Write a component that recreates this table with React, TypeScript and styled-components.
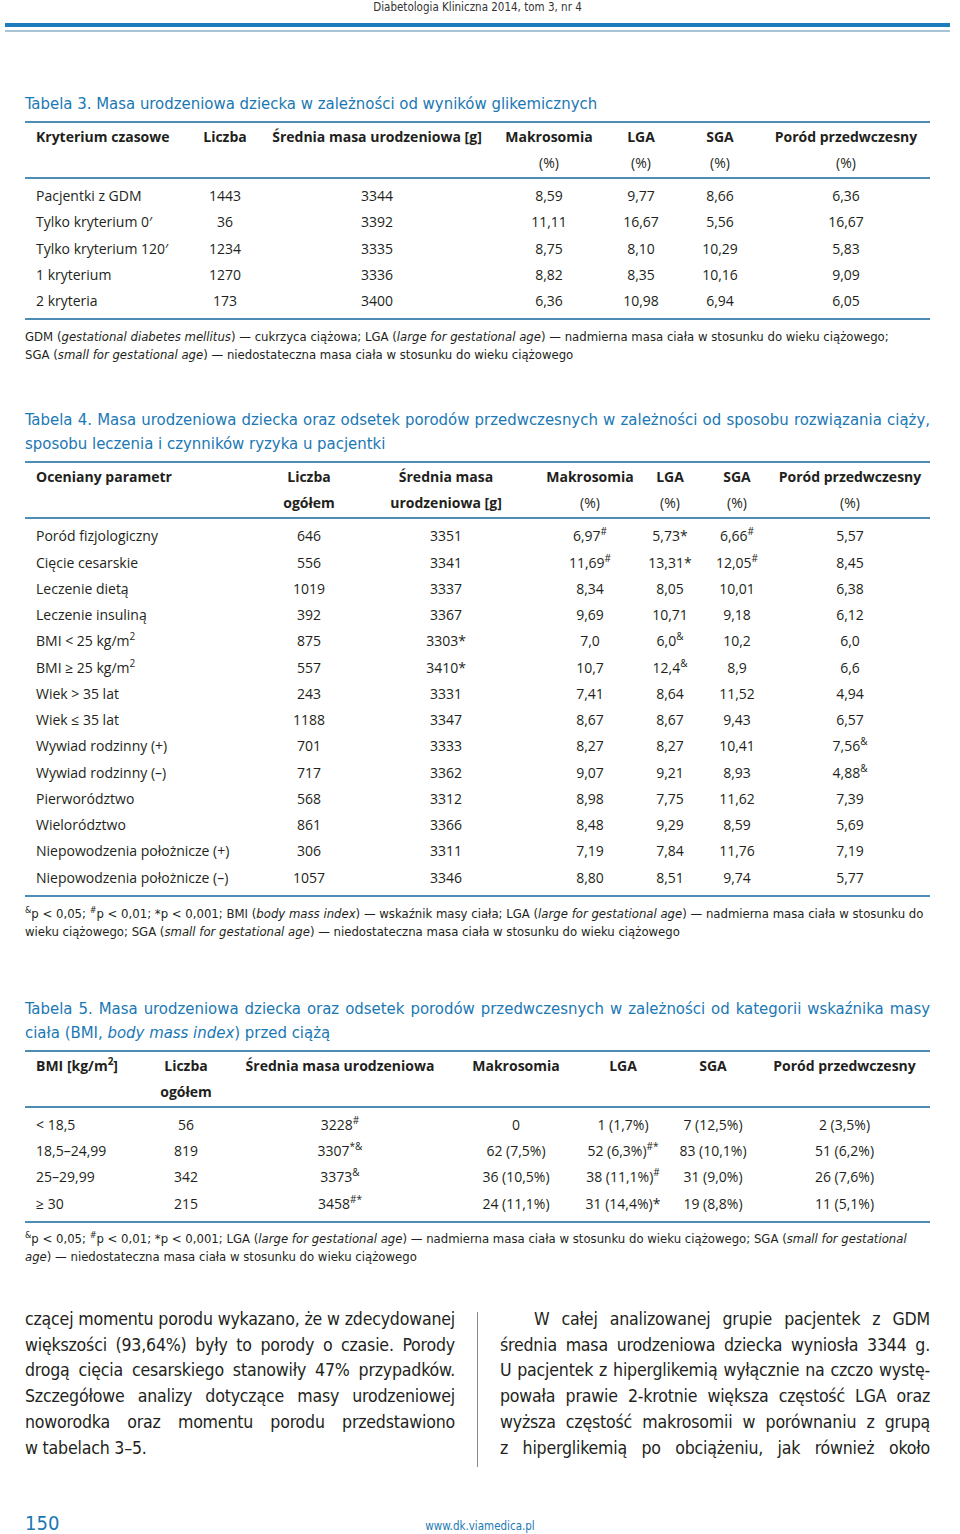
import React from 'react';
import styled, { createGlobalStyle } from 'styled-components';

const narrow = '"Liberation Sans Narrow", "DejaVu Sans Condensed", "Roboto", sans-serif';
const sans = '"Open Sans", "Noto Sans", sans-serif';
const blue = '#1a78b4';
const rule = '#4f8cb4';
const ink = '#231f20';

const GlobalStyle = createGlobalStyle`
  html, body {
    margin: 0;
    padding: 0;
    background: #ffffff;
  }
  body {
    color: ${ink};
    font-family: ${sans};
  }
`;

// a cell is "base^sup^rest"; sup and rest are optional
type Cell = string;
type TableData = {
  cols: number[];
  head: [string, string][];
  rows: Cell[][];
};

const table3: TableData = {
  cols: [165, 70, 234, 110, 74, 84, 168],
  head: [
    ['Kryterium czasowe', ''],
    ['Liczba', ''],
    ['Średnia masa urodzeniowa [g]', ''],
    ['Makrosomia', '(%)'],
    ['LGA', '(%)'],
    ['SGA', '(%)'],
    ['Poród przedwczesny', '(%)'],
  ],
  rows: [
    ['Pacjentki z GDM', '1443', '3344', '8,59', '9,77', '8,66', '6,36'],
    ['Tylko kryterium 0′', '36', '3392', '11,11', '16,67', '5,56', '16,67'],
    ['Tylko kryterium 120′', '1234', '3335', '8,75', '8,10', '10,29', '5,83'],
    ['1 kryterium', '1270', '3336', '8,82', '8,35', '10,16', '9,09'],
    ['2 kryteria', '173', '3400', '6,36', '10,98', '6,94', '6,05'],
  ],
};

const table4: TableData = {
  cols: [245, 78, 196, 92, 68, 66, 160],
  head: [
    ['Oceniany parametr', ''],
    ['Liczba', '*ogółem'],
    ['Średnia masa', '*urodzeniowa [g]'],
    ['Makrosomia', '(%)'],
    ['LGA', '(%)'],
    ['SGA', '(%)'],
    ['Poród przedwczesny', '(%)'],
  ],
  rows: [
    ['Poród fizjologiczny', '646', '3351', '6,97^#', '5,73*', '6,66^#', '5,57'],
    ['Cięcie cesarskie', '556', '3341', '11,69^#', '13,31*', '12,05^#', '8,45'],
    ['Leczenie dietą', '1019', '3337', '8,34', '8,05', '10,01', '6,38'],
    ['Leczenie insuliną', '392', '3367', '9,69', '10,71', '9,18', '6,12'],
    ['BMI < 25 kg/m^2', '875', '3303*', '7,0', '6,0^&', '10,2', '6,0'],
    ['BMI ≥ 25 kg/m^2', '557', '3410*', '10,7', '12,4^&', '8,9', '6,6'],
    ['Wiek > 35 lat', '243', '3331', '7,41', '8,64', '11,52', '4,94'],
    ['Wiek ≤ 35 lat', '1188', '3347', '8,67', '8,67', '9,43', '6,57'],
    ['Wywiad rodzinny (+)', '701', '3333', '8,27', '8,27', '10,41', '7,56^&'],
    ['Wywiad rodzinny (–)', '717', '3362', '9,07', '9,21', '8,93', '4,88^&'],
    ['Pierworództwo', '568', '3312', '8,98', '7,75', '11,62', '7,39'],
    ['Wielorództwo', '861', '3366', '8,48', '9,29', '8,59', '5,69'],
    ['Niepowodzenia położnicze (+)', '306', '3311', '7,19', '7,84', '11,76', '7,19'],
    ['Niepowodzenia położnicze (–)', '1057', '3346', '8,80', '8,51', '9,74', '5,77'],
  ],
};

const table5: TableData = {
  cols: [120, 82, 226, 126, 88, 92, 171],
  head: [
    ['BMI [kg/m^2^]', ''],
    ['Liczba', '*ogółem'],
    ['Średnia masa urodzeniowa', ''],
    ['Makrosomia', ''],
    ['LGA', ''],
    ['SGA', ''],
    ['Poród przedwczesny', ''],
  ],
  rows: [
    ['< 18,5', '56', '3228^#', '0', '1 (1,7%)', '7 (12,5%)', '2 (3,5%)'],
    ['18,5–24,99', '819', '3307^*&', '62 (7,5%)', '52 (6,3%)^#*', '83 (10,1%)', '51 (6,2%)'],
    ['25–29,99', '342', '3373^&', '36 (10,5%)', '38 (11,1%)^#', '31 (9,0%)', '26 (7,6%)'],
    ['≥ 30', '215', '3458^#*', '24 (11,1%)', '31 (14,4%)*', '19 (8,8%)', '11 (5,1%)'],
  ],
};

const leftColumn = [
  'czącej momentu porodu wykazano, że w zdecydowanej',
  'większości (93,64%) były to porody o czasie. Porody',
  'drogą cięcia cesarskiego stanowiły 47% przypadków.',
  'Szczegółowe analizy dotyczące masy urodzeniowej',
  'noworodka oraz momentu porodu przedstawiono',
  'w tabelach 3–5.',
];

const rightColumn = [
  'W całej analizowanej grupie pacjentek z GDM',
  'średnia masa urodzeniowa dziecka wyniosła 3344 g.',
  'U pacjentek z hiperglikemią wyłącznie na czczo wystę-',
  'powała prawie 2-krotnie większa częstość LGA oraz',
  'wyższa częstość makrosomii w porównaniu z grupą',
  'z hiperglikemią po obciążeniu, jak również około',
];

const Page = styled.div`
  width: 960px;
  height: 1534px;
  overflow: hidden;
  box-sizing: border-box;
  padding: 0 30px 0 25px;
`;

const RunningHead = styled.div`
  margin: 0 -25px;
  text-align: center;
  font-family: ${narrow};
  font-size: 11.5px;
  line-height: 14px;
  color: #333;
`;

const TopBar = styled.div`
  margin: 9px -20px 0 -20px;
  height: 4px;
  background: #1c7dbd;
`;

const ThinBar = styled.div`
  margin: 3px -20px 0 -20px;
  height: 2px;
  background: #a9c3d3;
`;

const Title = styled.div<{ $top: number }>`
  margin-top: ${(p) => p.$top}px;
  margin-bottom: 5px;
  color: ${blue};
  font-family: ${narrow};
  font-size: 16.6px;
  line-height: 24px;
`;

const TitleLine = styled.div<{ $full?: boolean }>`
  text-align: ${(p) => (p.$full ? 'justify' : 'left')};
  text-align-last: ${(p) => (p.$full ? 'justify' : 'left')};
  white-space: nowrap;
`;

const Table = styled.table`
  width: 905px;
  table-layout: fixed;
  border-collapse: collapse;
  border-top: 2px solid ${rule};
  border-bottom: 2px solid ${rule};
  font-family: ${sans};
  font-size: 14px;
  color: ${ink};

  thead tr {
    border-bottom: 2px solid ${rule};
  }
  tbody tr:first-child td {
    padding-top: 4px;
  }
  tbody tr:last-child td {
    padding-bottom: 4px;
  }
`;

const Col = styled.col<{ $w: number }>`
  width: ${(p) => p.$w}px;
`;

const Th = styled.th`
  padding: 1px 0 1px;
  vertical-align: top;
  text-align: center;
  font-weight: 700;
  line-height: 26px;
  white-space: nowrap;

  &:first-child {
    text-align: left;
    padding-left: 11px;
  }
`;

const SubHead = styled.div<{ $bold: boolean }>`
  height: 26px;
  font-weight: ${(p) => (p.$bold ? 700 : 400)};
`;

const Td = styled.td`
  padding: 0;
  text-align: center;
  line-height: 26.25px;
  white-space: nowrap;

  &:first-child {
    text-align: left;
    padding-left: 11px;
  }
`;

const Sup = styled.sup`
  font-size: 10px;
  line-height: 0;
  vertical-align: 6px;
`;

const Note = styled.div<{ $top: number }>`
  margin-top: ${(p) => p.$top}px;
  font-family: ${narrow};
  font-size: 13px;
  line-height: 18px;
  color: ${ink};
  white-space: nowrap;
`;

const NoteSup = styled.sup`
  font-size: 9px;
  line-height: 0;
  vertical-align: 5px;
`;

const Columns = styled.div`
  margin-top: 41px;
  display: grid;
  grid-template-columns: 430px 1px 430px;
  column-gap: 22px;
  align-items: start;
`;

const Divider = styled.div`
  background: #8a8a8a;
  margin-top: 5px;
  height: 155px;
`;

const Text = styled.div`
  font-family: ${narrow};
  font-size: 17.6px;
  letter-spacing: -0.2px;
  line-height: 25.8px;
  color: ${ink};
`;

const Line = styled.div<{ $last?: boolean; $indent?: boolean }>`
  white-space: nowrap;
  text-align: justify;
  text-align-last: ${(p) => (p.$last ? 'left' : 'justify')};
  padding-left: ${(p) => (p.$indent ? 34 : 0)}px;
`;

const Footer = styled.div`
  margin-top: 42px;
  display: grid;
  grid-template-columns: 1fr auto 1fr;
  align-items: center;
  margin-right: -5px;
  font-family: ${narrow};
  color: ${blue};
`;

const PageNo = styled.span`
  font-size: 20px;
  line-height: 22px;
`;

const Url = styled.span`
  font-size: 11.5px;
  line-height: 22px;
  padding-top: 6px;
`;

const renderCell = (value: string) => {
  const [base, sup, rest] = value.split('^');
  return (
    <>
      {base}
      {sup && <Sup>{sup}</Sup>}
      {rest}
    </>
  );
};

const DataTable = ({ data }: { data: TableData }) => (
  <Table>
    <colgroup>
      {data.cols.map((w, i) => (
        <Col key={i} $w={w} />
      ))}
    </colgroup>
    <thead>
      <tr>
        {data.head.map(([a, b], i) => (
          <Th key={i}>
            <div>{renderCell(a)}</div>
            <SubHead $bold={b.startsWith('*')}>{b.replace('*', '')}</SubHead>
          </Th>
        ))}
      </tr>
    </thead>
    <tbody>
      {data.rows.map((row, r) => (
        <tr key={r}>
          {row.map((cell, c) => (
            <Td key={c}>{renderCell(cell)}</Td>
          ))}
        </tr>
      ))}
    </tbody>
  </Table>
);

const Significance = () => (
  <>
    <NoteSup>&amp;</NoteSup>p &lt; 0,05; <NoteSup>#</NoteSup>p &lt; 0,01; *p &lt; 0,001;{' '}
  </>
);

export default function App() {
  return (
    <>
      <GlobalStyle />
      <Page>
        <RunningHead>Diabetologia Kliniczna 2014, tom 3, nr 4</RunningHead>
        <TopBar />
        <ThinBar />

        <Title $top={60}>
          <TitleLine>Tabela 3. Masa urodzeniowa dziecka w zależności od wyników glikemicznych</TitleLine>
        </Title>
        <DataTable data={table3} />
        <Note $top={8}>
          GDM (<i>gestational diabetes mellitus</i>) — cukrzyca ciążowa; LGA (<i>large for gestational age</i>) —
          nadmierna masa ciała w stosunku do wieku ciążowego;
          <br />
          SGA (<i>small for gestational age</i>) — niedostateczna masa ciała w stosunku do wieku ciążowego
        </Note>

        <Title $top={44}>
          <TitleLine $full>
            Tabela 4. Masa urodzeniowa dziecka oraz odsetek porodów przedwczesnych w zależności od sposobu
            rozwiązania ciąży,
          </TitleLine>
          <TitleLine>sposobu leczenia i czynników ryzyka u pacjentki</TitleLine>
        </Title>
        <DataTable data={table4} />
        <Note $top={8}>
          <Significance />
          BMI (<i>body mass index</i>) — wskaźnik masy ciała; LGA (<i>large for gestational age</i>) — nadmierna masa
          ciała w stosunku do
          <br />
          wieku ciążowego; SGA (<i>small for gestational age</i>) — niedostateczna masa ciała w stosunku do wieku
          ciążowego
        </Note>

        <Title $top={56}>
          <TitleLine $full>
            Tabela 5. Masa urodzeniowa dziecka oraz odsetek porodów przedwczesnych w zależności od kategorii wskaźnika
            masy
          </TitleLine>
          <TitleLine>
            ciała (BMI, <i>body mass index</i>) przed ciążą
          </TitleLine>
        </Title>
        <DataTable data={table5} />
        <Note $top={7}>
          <Significance />
          LGA (<i>large for gestational age</i>) — nadmierna masa ciała w stosunku do wieku ciążowego; SGA (
          <i>small for gestational</i>
          <br />
          <i>age</i>) — niedostateczna masa ciała w stosunku do wieku ciążowego
        </Note>

        <Columns>
          <Text>
            {leftColumn.map((l, i) => (
              <Line key={i} $last={i === leftColumn.length - 1}>
                {l}
              </Line>
            ))}
          </Text>
          <Divider />
          <Text>
            {rightColumn.map((l, i) => (
              <Line key={i} $indent={i === 0}>
                {l}
              </Line>
            ))}
          </Text>
        </Columns>

        <Footer>
          <PageNo>150</PageNo>
          <Url>www.dk.viamedica.pl</Url>
          <span />
        </Footer>
      </Page>
    </>
  );
}
